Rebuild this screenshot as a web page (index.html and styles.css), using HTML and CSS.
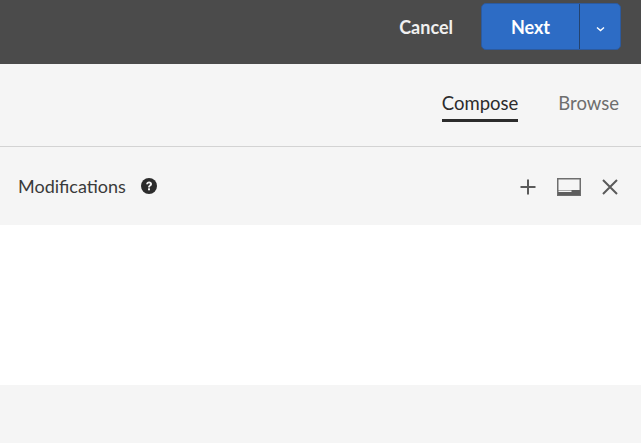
FILE: index.html
```html
<!DOCTYPE html>
<html lang="en">
<head>
  <meta charset="UTF-8" />
  <title>Modifications</title>
  <link rel="stylesheet" href="styles.css">
</head>
<body>
  <header class="top-bar">
    <a class="cancel-link">Cancel</a>
    <div class="split-btn">
      <button class="next-btn">Next</button>
      <button class="caret-btn">
        <svg width="9" height="6" viewBox="0 0 9 6"><path d="M1 1.5 L4.5 4.5 L8 1.5" fill="none" stroke="#fff" stroke-width="1.4"/></svg>
      </button>
    </div>
  </header>

  <nav class="tabs">
    <span class="tab tab-active">Compose</span>
    <span class="tab">Browse</span>
  </nav>

  <section class="panel-head">
    <div class="panel-title">
      <span>Modifications</span>
      <svg class="help-icon" width="16" height="16" viewBox="0 0 16 16">
        <circle cx="8" cy="8" r="8" fill="#2c2c2c"/>
        <path d="M5.2 6.2 C5.3 4.5 6.5 3.5 8.1 3.5 C9.8 3.5 11 4.5 11 5.9 C11 7.1 10.2 7.7 9.5 8.2 C9 8.5 8.9 8.8 8.9 9.5 L7.1 9.5 C7.1 8.3 7.4 7.8 8.1 7.3 C8.7 6.9 8.9 6.6 8.9 6.1 C8.9 5.6 8.6 5.2 8 5.2 C7.4 5.2 7.1 5.6 7 6.2 Z" fill="#f5f5f5"/>
        <rect x="7" y="10.3" width="2" height="2" fill="#f5f5f5"/>
      </svg>
    </div>
    <div class="panel-actions">
      <svg width="16" height="16" viewBox="0 0 16 16"><path d="M8 0.5 V15.5 M0.5 8 H15.5" stroke="#5a5a5a" stroke-width="2" fill="none"/></svg>
      <svg width="24" height="18" viewBox="0 0 24 18">
        <rect x="0.75" y="0.75" width="22.5" height="16.5" fill="none" stroke="#6e6e6e" stroke-width="1.5"/>
        <rect x="1" y="12" width="22" height="5" fill="#5e5e5e"/>
        <rect x="1.5" y="12.5" width="13" height="1.5" fill="#f5f5f5"/>
      </svg>
      <svg width="16" height="16" viewBox="0 0 16 16"><path d="M1 1 L15 15 M15 1 L1 15" stroke="#5a5a5a" stroke-width="2" fill="none"/></svg>
    </div>
  </section>

  <section class="panel-body"></section>
  <div class="page-foot"></div>
</body>
</html>
```

FILE: styles.css
```css
html, body {
  height: 100%;
}

body {
  margin: 0;
  font-family: 'Lato', 'Open Sans', sans-serif;
  background-color: #f5f5f5;
  color: #2c2c2c;
  display: flex;
  flex-direction: column;
  overflow: hidden;
}

.top-bar {
  height: 64px;
  background-color: #4b4b4b;
  display: flex;
  align-items: center;
  justify-content: flex-end;
  padding: 0 20px 11px 0;
  box-sizing: border-box;
  flex-shrink: 0;
}

.cancel-link {
  color: #f0f0f0;
  font-size: 18px;
  font-weight: 700;
  margin-right: 28px;
}

.split-btn {
  display: flex;
  height: 47px;
  border: 1px solid #2c5a9e;
  box-sizing: border-box;
  width: 140px;
  border-radius: 5px;
  overflow: hidden;
  background-color: #2d6cc5;
}

.split-btn button {
  border: none;
  background: transparent;
  color: #fff;
  font-family: inherit;
  padding: 0;
  cursor: pointer;
}

.next-btn {
  width: 98px;
  font-size: 18px;
  font-weight: 700;
  border-right: 1px solid #24436f !important;
}

.caret-btn {
  width: 40px;
  display: flex;
  align-items: center;
  justify-content: center;
  padding-top: 4px !important;
}

.tabs {
  height: 83px;
  box-sizing: border-box;
  border-bottom: 1px solid #d3d3d3;
  display: flex;
  justify-content: flex-end;
  align-items: flex-start;
  gap: 40px;
  padding: 26px 22px 0 0;
  flex-shrink: 0;
}

.tab {
  font-size: 18.5px;
  line-height: 26px;
  color: #6e6e6e;
  padding-bottom: 3px;
}

.tab-active {
  color: #2c2c2c;
  border-bottom: 3px solid #2c2c2c;
}

.panel-head {
  height: 78px;
  display: flex;
  align-items: center;
  justify-content: space-between;
  padding: 0 23px 0 18px;
  box-sizing: border-box;
  flex-shrink: 0;
}

.panel-title {
  display: flex;
  align-items: center;
  gap: 15px;
  font-size: 18px;
  color: #3a3a3a;
}

.panel-actions {
  display: flex;
  align-items: center;
  gap: 21px;
  margin-top: 2px;
}

.panel-body {
  height: 160px;
  background-color: #fff;
  flex-shrink: 0;
}

.page-foot {
  flex: 1;
}
```
